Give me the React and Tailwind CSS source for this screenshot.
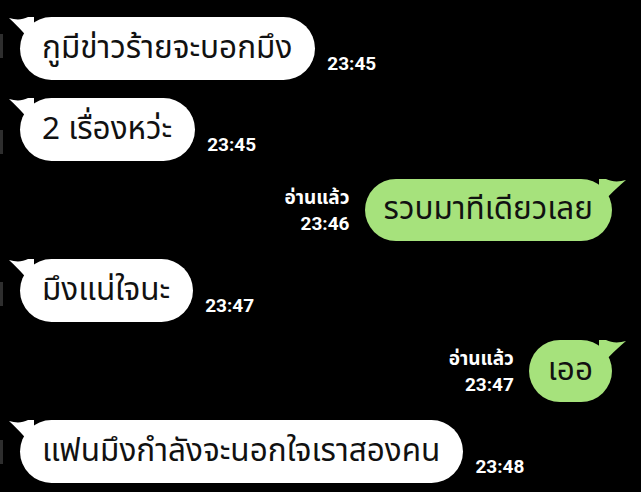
import React from 'react';

const MESSAGES = [
  { id: 1, side: 'left', text: 'กูมีข่าวร้ายจะบอกมึง', time: '23:45' },
  { id: 2, side: 'left', text: '2 เรื่องหว่ะ', time: '23:45' },
  { id: 3, side: 'right', text: 'รวบมาทีเดียวเลย', time: '23:46' },
  { id: 4, side: 'left', text: 'มึงแน่ใจนะ', time: '23:47' },
  { id: 5, side: 'right', text: 'เออ', time: '23:47' },
  { id: 6, side: 'left', text: 'แฟนมึงกำลังจะนอกใจเราสองคน', time: '23:48' },
];

const thai = { fontFamily: '"Noto Sans Thai", "Noto Sans", "DejaVu Sans", sans-serif' };

function LeftTail() {
  return (
    <svg className="absolute -left-[12px] -top-[1px]" width="26" height="28" viewBox="0 0 26 28">
      <path d="M1 2 C8 4 14 4 20 1 L26 1 L26 28 C20 22 12 12 1 2 Z" fill="#ffffff" />
    </svg>
  );
}

function RightTail() {
  return (
    <svg className="absolute -right-[15px] -top-[1px]" width="28" height="28" viewBox="0 0 28 28">
      <path d="M27 2 C20 4 13 4 7 1 L0 1 L0 28 C6 22 15 12 27 2 Z" fill="#a6e27c" />
    </svg>
  );
}

function Time({ children }) {
  return (
    <span className="text-[19px] font-bold leading-none text-white" style={{ fontFamily: 'Roboto, "Liberation Sans", sans-serif' }}>
      {children}
    </span>
  );
}

export default function App() {
  return (
    <div className="relative w-[641px] h-[492px] overflow-hidden bg-black">
      <div className="flex flex-col gap-[18px] pt-[17px] pl-[20px] pr-[29px]">
        {MESSAGES.map(m =>
          m.side === 'left' ? (
            <div key={m.id} className="flex items-end gap-[12px]">
              <div className="relative h-[63px] rounded-full bg-white pl-[22px] pr-[23px] flex items-center">
                <LeftTail />
                <span className="relative text-[31.5px] text-[#111] whitespace-nowrap" style={thai}>{m.text}</span>
              </div>
              <div className="pb-[4px]"><Time>{m.time}</Time></div>
            </div>
          ) : (
            <div key={m.id} className="flex items-end justify-end gap-[15px]">
              <div className="flex flex-col items-end gap-[6px] pb-[8px]">
                <span className="text-[19px] font-bold leading-none text-white" style={thai}>อ่านแล้ว</span>
                <Time>{m.time}</Time>
              </div>
              <div className="relative h-[62px] rounded-full bg-[#a6e27c] px-[19px] flex items-center">
                <RightTail />
                <span className="relative text-[31.5px] text-[#111] whitespace-nowrap" style={thai}>{m.text}</span>
              </div>
            </div>
          )
        )}
      </div>
      <div className="absolute left-0 top-[34px] h-[24px] w-[3px] bg-[#2e2e2e]" />
      <div className="absolute left-0 top-[130px] h-[24px] w-[3px] bg-[#2e2e2e]" />
      <div className="absolute left-0 top-[282px] h-[24px] w-[3px] bg-[#2e2e2e]" />
      <div className="absolute left-0 top-[440px] h-[24px] w-[3px] bg-[#2e2e2e]" />
    </div>
  );
}
